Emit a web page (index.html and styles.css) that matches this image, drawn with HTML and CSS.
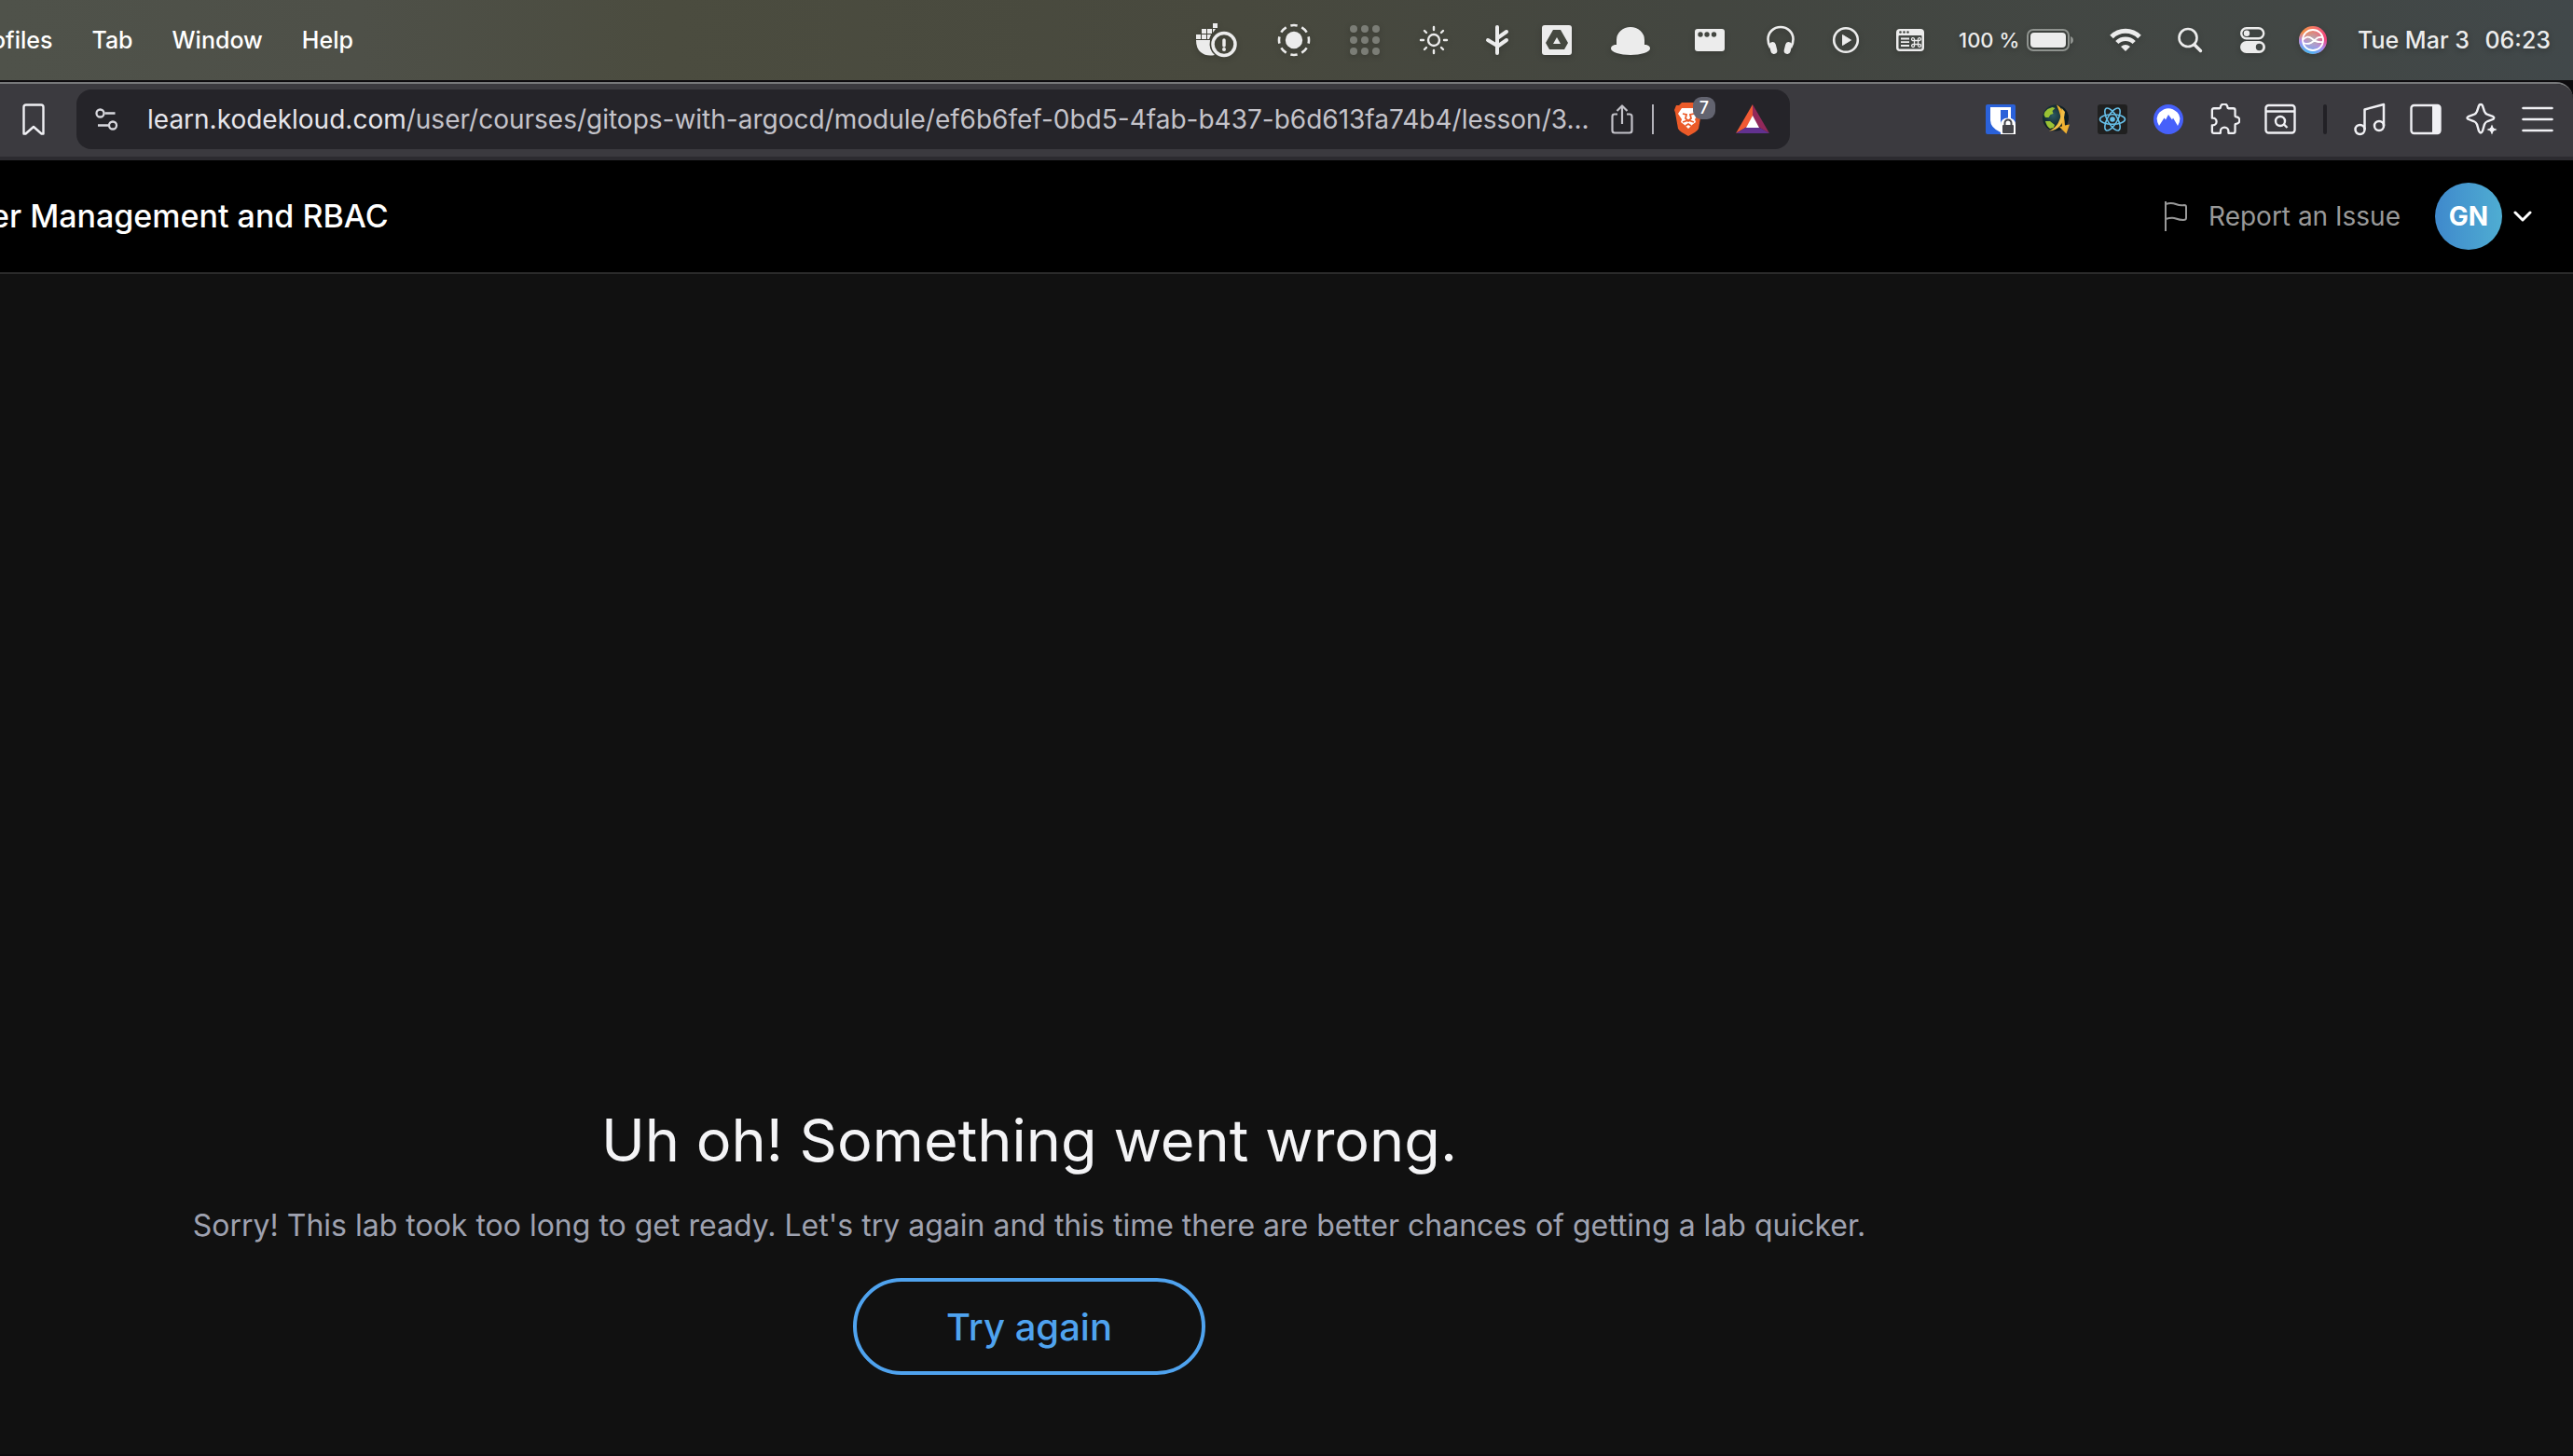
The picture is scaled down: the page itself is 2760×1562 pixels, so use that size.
FILE: index.html
```html
<!DOCTYPE html>
<html lang="en">
<head>
<meta charset="utf-8">
<meta name="viewport" content="width=device-width, initial-scale=1">
<title>User Management and RBAC</title>
<link rel="stylesheet" href="styles.css">
</head>
<body>
<div class="menubar">
  <nav class="menus" aria-label="Application menu">
    <button class="menu" type="button">ofiles</button>
    <button class="menu" type="button">Tab</button>
    <button class="menu" type="button">Window</button>
    <button class="menu" type="button">Help</button>
  </nav>
  <div class="status">
    <!-- container engine warning -->
    <svg width="56" height="40" viewBox="0 0 56 40" fill="#ececec"><path d="M24 2h5v5h-5zM12 8h5v5h-5zM18 8h5v5h-5zM24 8h3l-3 4zM6 14h5v5H6zM12 14h5v5h-5zM18 14h4l-2 5h-2zM6 20h15q-2 10 5 16q-9 2-15-3q-5-4-5-13z"/><circle cx="36" cy="24.500" r="12" fill="none" stroke="#ececec" stroke-width="3.500"/><path d="M36 20v6" stroke="#ececec" stroke-width="3.500" stroke-linecap="round"/><circle cx="36" cy="30" r="2"/></svg>
    <svg width="46" height="40" viewBox="0 0 46 40"><circle cx="23" cy="20" r="9.200" fill="#ececec"/><circle cx="23" cy="20" r="16" fill="none" stroke="#ececec" stroke-width="2.600" pathLength="80" stroke-dasharray="6 4" stroke-dashoffset="3"/></svg>
    <svg width="42" height="40" viewBox="0 0 42 40" fill="#7b7d76"><circle cx="9" cy="8" r="4"/><circle cx="21" cy="8" r="4"/><circle cx="33" cy="8" r="4"/><circle cx="9" cy="20" r="4"/><circle cx="21" cy="20" r="4"/><circle cx="33" cy="20" r="4"/><circle cx="9" cy="32" r="4"/><circle cx="21" cy="32" r="4"/><circle cx="33" cy="32" r="4"/></svg>
    <svg width="42" height="40" viewBox="0 0 42 40" fill="none" stroke="#ececec" stroke-width="2.400" stroke-linecap="round"><circle cx="21" cy="20" r="6"/><path d="M21 6v3M21 31v3M7 20h3M32 20h3M11 10l2 2M29 28l2 2M11 30l2-2M29 12l2-2"/></svg>
    <svg width="30" height="40" viewBox="0 0 30 40" fill="none" stroke="#ececec" stroke-width="4" stroke-linecap="round"><path d="M15 6v28M15 18l10-7M15 27l10-7M15 26L5 20"/></svg>
    <svg width="34" height="40" viewBox="0 0 34 40"><rect x="1" y="4" width="32" height="32" rx="3" fill="#ececec"/><path d="M13 9h8l8 14-4 7H9l-4-7zM17 17l-4 7h8z" fill="#45483f" fill-rule="evenodd"/></svg>
    <svg width="60" height="40" viewBox="0 0 60 40" fill="#ececec"><path d="M15 25V20a15 14 0 0 1 30 0v5c4 0 6 2 6 4c0 4-10 7-21 7s-21-3-21-7c0-2 2-4 6-4z"/></svg>
    <svg width="46" height="40" viewBox="0 0 46 40"><rect x="7" y="8" width="32" height="24" rx="3" fill="#ececec"/><g fill="#434640"><circle cx="13" cy="14" r="2.700"/><circle cx="20" cy="14" r="2.700"/><circle cx="27.500" cy="14" r="2.700"/></g></svg>
    <svg width="42" height="40" viewBox="0 0 42 40"><path d="M10 28Q7.500 24 7.500 19a13.500 13 0 0 1 27 0q0 5-2.500 9" fill="none" stroke="#ececec" stroke-width="2.600"/><rect x="9.500" y="22" width="7" height="13" rx="3.500" fill="#ececec" transform="rotate(-14 13 28)"/><rect x="25.500" y="22" width="7" height="13" rx="3.500" fill="#ececec" transform="rotate(14 29 28)"/></svg>
    <svg width="34" height="40" viewBox="0 0 34 40"><circle cx="17" cy="20" r="12.800" fill="none" stroke="#ececec" stroke-width="2.600"/><path d="M13.500 14.500v11l9-5.500z" fill="#ececec" stroke="#ececec" stroke-linejoin="round"/></svg>
    <svg width="40" height="40" viewBox="0 0 40 40"><rect x="5" y="8" width="30" height="24" rx="4" fill="#ececec"/><g fill="#424642"><circle cx="9.500" cy="11.500" r="1.300"/><circle cx="13.500" cy="11.500" r="1.300"/><circle cx="17.500" cy="11.500" r="1.300"/><rect x="7.500" y="15" width="25" height="14.500" rx="1"/></g><path d="M10 18.500h9M10 22.200h9M10 26h9" stroke="#ececec" stroke-width="1.800"/><path d="M24.500 20.500h4v4h-4zM24.500 20.500h-1a1.500 1.500 0 1 1 1-1.500zM28.500 20.500v-1a1.500 1.500 0 1 1 1.500 1zM28.500 24.500h1a1.500 1.500 0 1 1-1 1.500zM24.500 24.500v1a1.500 1.500 0 1 1-1.500-1z" fill="none" stroke="#ececec" stroke-width="1.300"/></svg>
    <div class="battery"><span>100 %</span>
      <svg width="52" height="40" viewBox="0 0 52 40"><rect x="2" y="9" width="44" height="22" rx="6" fill="none" stroke="#8f938f" stroke-width="2"/><rect x="5" y="12" width="38" height="16" rx="4" fill="#ececec"/><path d="M48 16q3 1 3 4t-3 4z" fill="#8f938f"/></svg>
    </div>
    <svg width="46" height="40" viewBox="0 0 46 40"><path d="M8 16.500a21 21 0 0 1 30 0" fill="none" stroke="#ececec" stroke-width="5"/><path d="M13.800 22.500a13 13 0 0 1 18.400 0" fill="none" stroke="#ececec" stroke-width="4.500"/><path d="M18 27q5-4 10 0l-5 5z" fill="#ececec"/></svg>
    <svg width="28" height="40" viewBox="0 0 28 40" fill="none" stroke="#ececec"><circle cx="12" cy="17.500" r="9.500" stroke-width="2.600"/><path d="M19 25l6.500 6.500" stroke-width="3.400" stroke-linecap="round"/></svg>
    <svg width="38" height="40" viewBox="0 0 38 40"><rect x="9.200" y="7.200" width="24" height="11" rx="5.500" fill="none" stroke="#ececec" stroke-width="2.400"/><circle cx="15" cy="12.700" r="3.200" fill="#ececec"/><rect x="8" y="21" width="27" height="13" rx="6.500" fill="#ececec"/><circle cx="28.500" cy="27.500" r="3.700" fill="#424745"/></svg>
    <svg width="32" height="40" viewBox="0 0 32 40"><defs><linearGradient id="siri" x1="0" y1=".3" x2="1" y2=".4"><stop offset="0" stop-color="#f39a3d"/><stop offset=".55" stop-color="#f4726a"/><stop offset="1" stop-color="#f0427c"/></linearGradient><linearGradient id="cool" x1=".6" y1=".35" x2=".4" y2="1"><stop offset="0" stop-color="#c86fe0" stop-opacity="0"/><stop offset=".5" stop-color="#a98cf0"/><stop offset="1" stop-color="#3fb8f2"/></linearGradient><radialGradient id="glow"><stop offset="0" stop-color="#aab0b8"/><stop offset="1" stop-color="#aab0b8" stop-opacity="0"/></radialGradient></defs><circle cx="16" cy="20" r="15" fill="url(#siri)"/><circle cx="16" cy="20" r="15" fill="url(#cool)"/><circle cx="16" cy="20" r="12" fill="url(#glow)"/><circle cx="16" cy="20" r="11" fill="none" stroke="#fff" stroke-width="1.800"/><path d="M5 20q5-6 10-1.500t11.500 3.500M26.500 17q-5-1-8 2.500Q12 26 6 23" fill="none" stroke="#fff" stroke-width="1.800"/></svg>
    <div class="clock"><span>Tue Mar 3</span><span>06:23</span></div>
  </div>
</div>

<div class="desktop">
<div class="window">
  <div class="toolbar">
    <button class="tool" type="button" aria-label="Bookmark"><svg width="24" height="34" viewBox="0 0 24 34" fill="none" stroke="#f0f0f4" stroke-width="2.400" stroke-linejoin="round"><path d="M1.500 4q0-2.500 2.500-2.500h16q2.500 0 2.500 2.500v28.500h-2L12 25l-8.500 7.500h-2z"/></svg></button>
    <div class="address">
      <button class="tool" type="button" aria-label="Site settings"><svg width="26" height="26" viewBox="0 0 26 26" fill="none" stroke="#d8d8de" stroke-width="2.300"><circle cx="5.500" cy="6.500" r="4"/><path d="M10.500 6.500h11M3 19.500h11"/><circle cx="19" cy="19.500" r="4"/></svg></button>
      <div class="url"><span class="host">learn.kodekloud.com</span>/user/courses/gitops-with-argocd/module/ef6b6fef-0bd5-4fab-b437-b6d613fa74b4/lesson/3...</div>
      <button class="tool" type="button" aria-label="Share"><svg width="24" height="34" viewBox="0 0 24 34" fill="none" stroke="#c3c2c9" stroke-width="2.200" stroke-linejoin="round"><path d="M7 11.500H4Q1.500 11.500 1.500 14v15Q1.500 31.500 4 31.500h16q2.500 0 2.500-2.500V14q0-2.500-2.500-2.500h-3M12 22V2.500M6.500 8L12 2.500L17.500 8"/></svg></button>
      <span class="rule"></span>
      <button class="tool shields" type="button" aria-label="Shields"><svg width="30" height="36" viewBox="0 0 30 36"><path d="M8 0h14l3 3l3 0l2 5l-1 3l-3 17q-1 2-4 4l-7 4l-7-4q-3-2-4-4L1 11L0 8l2-5h3z" fill="#eb5a28"/><path d="M8 6h14l4 6l-4 6l1 3l-4 3l-1 1l-3 3l-3-3l-1-1l-4-3l1-3l-4-6z" fill="#fff"/><path d="M9 12l4 1l-1 4l3 3l3-3l-1-4l4-1M9 21l6-2l6 2M12 25l3-2l3 2" fill="none" stroke="#eb5a28" stroke-width="1.800"/></svg><span class="badge">7</span></button>
      <button class="tool" type="button" aria-label="Rewards"><svg width="36" height="32" viewBox="0 0 36 32"><path d="M18 0L0 31l12-7l6-11z" fill="#f15a34"/><path d="M18 0l18 31-12-7-6-11z" fill="#92285a"/><path d="M0 31l12-7h12l12 7z" fill="#62318f"/><path d="M18 12l7 13H11z" fill="#fff"/></svg></button>
    </div>
    <div class="extensions">
      <button class="tool" type="button" aria-label="Password manager"><svg width="34" height="34" viewBox="0 0 34 34"><rect x="1" y="1" width="32" height="32" rx="2" fill="#2a61d9"/><path d="M6 4h22v14q0 8-11 13Q6 26 6 18z" fill="#fff"/><path d="M17 7h8v12q0 4-8 8z" fill="#2a61d9"/><path d="M17 33V23q0-7.500 8-7.500t8 7.500v10z" fill="#fff"/><rect x="19" y="23" width="12" height="9" rx="1" fill="#45454a"/><path d="M21.500 23v-2a3.500 3.500 0 0 1 7 0v2" fill="none" stroke="#45454a" stroke-width="2"/></svg></button>
      <button class="tool" type="button" aria-label="Download manager"><svg width="34" height="34" viewBox="0 0 34 34"><defs><radialGradient id="sea" cx=".4" cy=".4"><stop offset="0" stop-color="#2c5a62"/><stop offset="1" stop-color="#0d1c22"/></radialGradient></defs><circle cx="16" cy="15.500" r="14" fill="url(#sea)"/><path d="M3.500 12q1-4 4-6l5-2 3 1-3 3 1 3-3 1-2 3H5zM5 19l5 0 5 4-1 3-4 1Q6 24 5 19z" fill="#9ac234"/><path d="M17 1.500q8 3 9 22l5-1-3.500 10L20 25l3-.5Q22 12 17 1.500z" fill="#f0b030"/><path d="M22.500 5Q22 24 9 29.500Q24 29 26 9z" fill="#f2be45"/></svg></button>
      <button class="tool" type="button" aria-label="React developer tools"><svg width="34" height="34" viewBox="0 0 34 34"><rect x="1" y="1" width="32" height="32" rx="3" fill="#202020"/><g fill="none" stroke="#66bfe8" stroke-width="1.600"><ellipse cx="17" cy="17" rx="13.500" ry="5.300"/><ellipse cx="17" cy="17" rx="13.500" ry="5.300" transform="rotate(60 17 17)"/><ellipse cx="17" cy="17" rx="13.500" ry="5.300" transform="rotate(120 17 17)"/></g><circle cx="17" cy="17" r="2.800" fill="#66bfe8"/></svg></button>
      <button class="tool" type="button" aria-label="VPN"><svg width="34" height="34" viewBox="0 0 34 34"><circle cx="17" cy="17" r="16" fill="#4660fa"/><path d="M7 24Q2 15 7.500 9.500Q17 1 26.500 9.500Q32 15 27 24l-5-8.500-1 2L17 12l-3 5.500-1.500-2z" fill="#fff"/></svg></button>
      <button class="tool" type="button" aria-label="Extensions"><svg width="34" height="34" viewBox="0 0 34 34" fill="none" stroke="#f0f0f4" stroke-width="2.400" stroke-linejoin="round"><path d="M5 5h6.500q1 0 1-1a4 4 0 0 1 8 0q0 1 1 1H27q2 0 2 2v6.500q0 1 1 1a4 4 0 0 1 0 8q-1 0-1 1V31q0 2-2 2h-5.500v-2a4.500 4.500 0 0 0-9 0v2H5q-2 0-2-2v-7h1a4 4 0 0 0 0-8H3V7q0-2 2-2z" transform="translate(1 .5) scale(.95)"/></svg></button>
      <button class="tool" type="button" aria-label="Search tabs"><svg width="34" height="34" viewBox="0 0 34 34" fill="none" stroke="#f0f0f4" stroke-width="2.400"><rect x="1.500" y="2" width="31" height="29.500" rx="3"/><path d="M2 8.500h30"/><circle cx="17" cy="19" r="5"/><path d="M20.500 22l4 4"/></svg></button>
    </div>
    <span class="separator"></span>
    <div class="actions">
      <button class="tool" type="button" aria-label="Media controls"><svg width="34" height="36" viewBox="0 0 34 36" fill="none" stroke="#f0f0f4" stroke-width="2.500" stroke-linejoin="round"><circle cx="6.500" cy="29" r="5"/><circle cx="27" cy="25" r="5"/><path d="M11.500 29V7.500L32 2v23"/></svg></button>
      <button class="tool" type="button" aria-label="Side panel"><svg width="34" height="34" viewBox="0 0 34 34"><rect x="1.500" y="2" width="31" height="30" rx="3" fill="none" stroke="#f0f0f4" stroke-width="2.400"/><path d="M24 2h7q2 0 2 2v26q0 2-2 2h-7z" fill="#f0f0f4"/></svg></button>
      <button class="tool" type="button" aria-label="Assistant"><svg width="34" height="36" viewBox="0 0 34 36"><path d="M16 2q1.500 0 2 1.500l2 6q1 2.500 3.500 3.500l6 2.200q1.500.8 0 2.600l-6 2.200q-2.500 1-3.500 3.500l-2 7q-2 4-4 0l-2-7q-1-2.500-3.500-3.500l-6-2.200q-2-1.500 0-2.600l6-2.200q2.500-1 3.500-3.500l2-6Q14.500 2 16 2z" fill="none" stroke="#f0f0f4" stroke-width="2.400"/><path d="M28 22l2 5 5 2-5 2-2 5-2-5-5-2 5-2z" fill="#f0f0f4" stroke="#3b3a3f" stroke-width="1"/></svg></button>
      <button class="tool" type="button" aria-label="Menu"><svg width="34" height="34" viewBox="0 0 34 34" fill="none" stroke="#f0f0f4" stroke-width="2.600" stroke-linecap="round"><path d="M1.500 5h31M1.500 17h31M1.500 29h31"/></svg></button>
    </div>
  </div>

  <header class="course">
    <h1 class="lesson">er Management and RBAC</h1>
    <div class="account">
      <a class="report" href="#report"><svg width="26" height="34" viewBox="0 0 26 34" fill="none" stroke="#999" stroke-width="2"><path d="M2 1v32M2 4q6-2 11 0t9 1q2 0 2 2v12q0 2-3 2-4 0-8-1.500T2 20"/></svg>Report an Issue</a>
      <button class="profile" type="button" aria-label="Account menu"><span class="avatar">GN</span><svg width="20" height="14" viewBox="0 0 20 14" fill="none" stroke="#fff" stroke-width="3" stroke-linecap="round" stroke-linejoin="round"><path d="M2 3l8 8 8-8"/></svg></button>
    </div>
  </header>

  <main class="lab">
    <h2 class="problem">Uh oh! Something went wrong.</h2>
    <p class="reason">Sorry! This lab took too long to get ready. Let's try again and this time there are better chances of getting a lab quicker.</p>
    <button class="retry" type="button">Try again</button>
  </main>
</div>
</div>
</body>
</html>
```
FILE: styles.css
```css
* {
  box-sizing: border-box;
}

body {
  margin: 0;
  min-height: 100vh;
  display: flex;
  flex-direction: column;
  overflow-x: hidden;
  background: #111;
  color: #fff;
  font-family: Inter, "Liberation Sans", sans-serif;
}

button {
  padding: 0;
  border: 0;
  background: none;
  color: inherit;
  font: inherit;
}

svg {
  display: block;
  flex: none;
}

.menubar {
  display: flex;
  align-items: center;
  justify-content: space-between;
  height: 86px;
  padding-right: 24px;
  background: linear-gradient(90deg, #4f524a 0%, #4e5048 14%, #4b4c3f 26%, #48493e 48%, #434640 66%, #424745 90%, #41484a 100%);
  font-size: 25px;
  font-weight: 500;
  white-space: nowrap;
}

.menus {
  display: flex;
  gap: 42px;
  margin-left: -9px;
  text-shadow: 0 2px 6px rgba(0, 0, 0, .3);
}

.status {
  display: flex;
  align-items: center;
  gap: 32px;
  color: #ececec;
  text-shadow: 0 2px 6px rgba(0, 0, 0, .3);
}

.status svg {
  filter: drop-shadow(0 2px 3px rgba(0, 0, 0, .2));
}

.battery {
  display: flex;
  align-items: center;
  justify-content: space-between;
  width: 124px;
  font-size: 22px;
}

.clock {
  display: flex;
  justify-content: space-between;
  width: 207px;
}

.desktop {
  flex: 1;
  display: flex;
  padding: 2px 0;
  background: #0d0b0e;
}

.window {
  flex: 1;
  min-width: 0;
  display: flex;
  flex-direction: column;
  border-top: 2px solid #77787a;
  border-top-right-radius: 18px;
  background: #111;
  overflow: hidden;
}

.toolbar {
  display: flex;
  align-items: center;
  height: 82px;
  padding: 0 21px 2px 24px;
  border-bottom: 4px solid #2c2b30;
  background: #3b3a3f;
}

.tool {
  flex: none;
  display: flex;
}

.address {
  flex: 0 1 1838px;
  min-width: 0;
  display: flex;
  align-items: center;
  height: 64px;
  margin-left: 34px;
  padding: 0 22px 0 20px;
  border-radius: 16px;
  background: #252429;
}

.url {
  flex: 1;
  min-width: 0;
  margin-left: 30px;
  overflow: hidden;
  color: #c4c3ca;
  font-size: 28px;
  line-height: 40px;
  white-space: nowrap;
}

.host {
  color: #e6e5eb;
}

.rule {
  width: 2px;
  height: 32px;
  margin: 0 22px 0 20px;
  background: #b4b3ba;
}

.shields {
  position: relative;
  margin-right: 36px;
}

.badge {
  position: absolute;
  top: -6px;
  left: 20px;
  width: 24px;
  height: 24px;
  border-radius: 9px;
  background: #62636f;
  color: #fff;
  font-size: 18px;
  font-weight: 500;
  line-height: 24px;
  text-align: center;
}

.extensions,
.actions {
  display: flex;
  align-items: center;
  gap: 26px;
}

.extensions {
  margin-left: auto;
}

.separator {
  width: 4px;
  height: 32px;
  margin: 0 29px;
  border-radius: 2px;
  background: #222126;
}

.course {
  display: flex;
  align-items: center;
  justify-content: space-between;
  height: 122px;
  padding-right: 44px;
  border-bottom: 2px solid #2b2b2b;
  background: #000;
}

.lesson {
  margin: 0 0 0 -10px;
  font-size: 34px;
  font-weight: 500;
  line-height: 48px;
  white-space: nowrap;
}

.account,
.report,
.profile {
  display: flex;
  align-items: center;
}

.account {
  gap: 37px;
}

.report {
  gap: 22px;
  color: #999;
  font-size: 28px;
  text-decoration: none;
}

.profile {
  gap: 12px;
}

.avatar {
  width: 72px;
  height: 72px;
  border-radius: 50%;
  background: linear-gradient(90deg, #3f89cc, #4fadd2);
  font-size: 28px;
  font-weight: 700;
  line-height: 72px;
  text-align: center;
}

.lab {
  flex: 1;
  display: flex;
  flex-direction: column;
  align-items: center;
  justify-content: flex-end;
  width: 80%;
  padding-bottom: 85px;
}

.problem {
  margin: 0;
  color: #f4f4f6;
  font-size: 63px;
  font-weight: 400;
  line-height: 80px;
}

.reason {
  margin: 28px 0 32px;
  color: #9fa2b0;
  font-size: 32px;
  line-height: 48px;
  text-align: center;
}

.retry {
  width: 378px;
  height: 104px;
  border: 4px solid #4fa3ef;
  border-radius: 52px;
  color: #4fa3ef;
  font-size: 40px;
  font-weight: 500;
}
```
